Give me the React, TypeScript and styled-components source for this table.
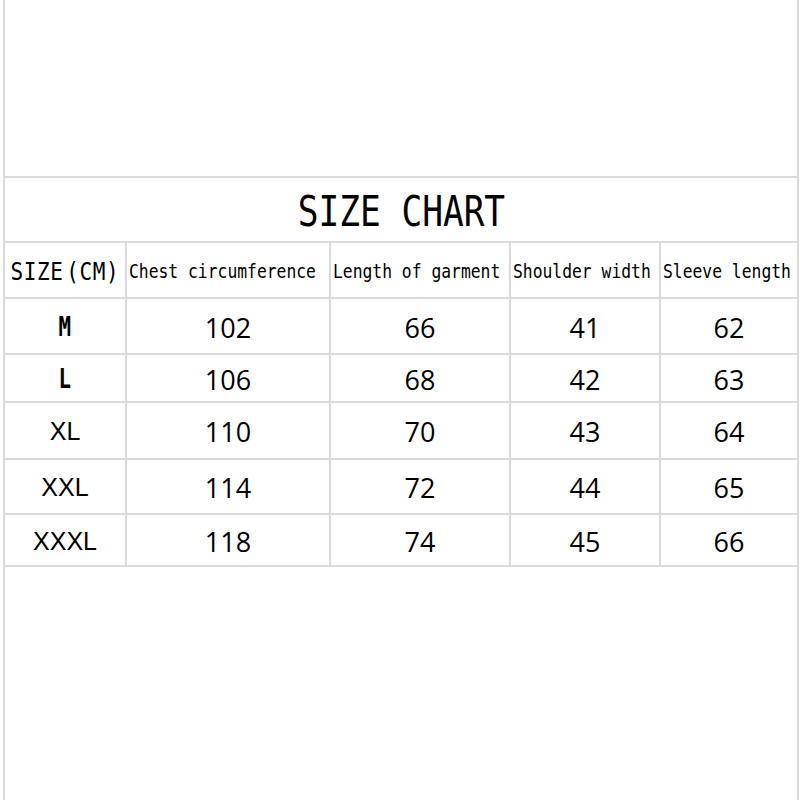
import React from "react";
import styled, { createGlobalStyle } from "styled-components";

const GlobalStyle = createGlobalStyle`
  html, body { margin: 0; padding: 0; background: #ffffff; }
  body { font-family: "Liberation Sans", Arial, sans-serif; color: #000; }
`;

const LINE = "#dadada";

const Frame = styled.div`
  box-sizing: border-box;
  margin-left: 3px;
  width: 796px;
  height: 800px;
  border-left: 2px solid ${LINE};
  border-right: 2px solid ${LINE};
  display: flex;
  flex-direction: column;
  overflow: hidden;
`;

const TopSpace = styled.div`
  height: 176px;
  flex: none;
`;

const TitleRow = styled.div`
  box-sizing: border-box;
  height: 67px;
  border-top: 2px solid ${LINE};
  border-bottom: 2px solid ${LINE};
  display: flex;
  align-items: center;
  justify-content: center;
  padding-top: 4px;
`;

const Title = styled.h1`
  margin: 0;
  display: inline-block;
  font-family: "DejaVu Sans Mono", monospace;
  font-weight: normal;
  font-size: 42px;
  line-height: 1;
  letter-spacing: 0;
  transform: scaleX(0.82);
  color: #000;
`;

const Grid = styled.div`
  display: grid;
  grid-template-columns: 122px 204px 180px 150px 136px;
`;

const Cell = styled.div<{ $h: number; $last?: boolean; $align?: "left" | "center" }>`
  box-sizing: border-box;
  height: ${(p) => p.$h}px;
  border-bottom: 2px solid ${LINE};
  border-right: ${(p) => (p.$last ? "none" : `2px solid ${LINE}`)};
  display: flex;
  align-items: center;
  justify-content: ${(p) => (p.$align === "left" ? "flex-start" : "center")};
  padding: 2px 0 0 ${(p) => (p.$align === "left" ? "2px" : "0")};
  overflow: visible;
  white-space: nowrap;
`;

const HeadText = styled.span`
  display: inline-block;
  font-family: "DejaVu Sans Mono", monospace;
  font-size: 19px;
  line-height: 1;
  transform: scaleX(0.86);
  transform-origin: left center;
  color: #000;
`;

const SizeHead = styled.span`
  display: inline-block;
  font-family: "DejaVu Sans Mono", monospace;
  font-size: 25px;
  line-height: 1;
  letter-spacing: 0.8px;
  transform: scaleX(0.84);
  color: #000;
`;

const Paren = styled.span`
  margin: 0 0 0 3px;
`;

const SizeLabel = styled.span<{ $mono?: boolean }>`
  display: inline-block;
  font-family: ${(p) =>
    p.$mono ? `"DejaVu Sans Mono", monospace` : `"Liberation Sans", Arial, sans-serif`};
  font-weight: ${(p) => (p.$mono ? 700 : 400)};
  font-size: ${(p) => (p.$mono ? "26px" : "25px")};
  line-height: 1;
  transform: ${(p) => (p.$mono ? "scaleX(0.8)" : "none")};
  color: #000;
`;

const Value = styled.span`
  font-family: "Open Sans", "Liberation Sans", sans-serif;
  font-size: 27px;
  line-height: 1;
  color: #000;
`;

const BottomSpace = styled.div`
  flex: 1;
`;

const headers = [
  "Chest circumference",
  "Length of garment",
  "Shoulder width",
  "Sleeve length",
];

const rows: { size: string; mono: boolean; h: number; values: number[] }[] = [
  { size: "M", mono: true, h: 56, values: [102, 66, 41, 62] },
  { size: "L", mono: true, h: 48, values: [106, 68, 42, 63] },
  { size: "XL", mono: false, h: 57, values: [110, 70, 43, 64] },
  { size: "XXL", mono: false, h: 55, values: [114, 72, 44, 65] },
  { size: "XXXL", mono: false, h: 52, values: [118, 74, 45, 66] },
];

export default function App() {
  return (
    <>
      <GlobalStyle />
      <Frame>
        <TopSpace />
        <TitleRow>
          <Title>SIZE CHART</Title>
        </TitleRow>
        <Grid>
          <Cell $h={56}>
            <SizeHead>
              SIZE<Paren>(</Paren>CM)
            </SizeHead>
          </Cell>
          {headers.map((h, i) => (
            <Cell key={h} $h={56} $align="left" $last={i === headers.length - 1}>
              <HeadText>{h}</HeadText>
            </Cell>
          ))}
          {rows.map((r) => (
            <React.Fragment key={r.size}>
              <Cell $h={r.h}>
                <SizeLabel $mono={r.mono}>{r.size}</SizeLabel>
              </Cell>
              {r.values.map((v, i) => (
                <Cell key={i} $h={r.h} $last={i === r.values.length - 1}>
                  <Value>{v}</Value>
                </Cell>
              ))}
            </React.Fragment>
          ))}
        </Grid>
        <BottomSpace />
      </Frame>
    </>
  );
}
